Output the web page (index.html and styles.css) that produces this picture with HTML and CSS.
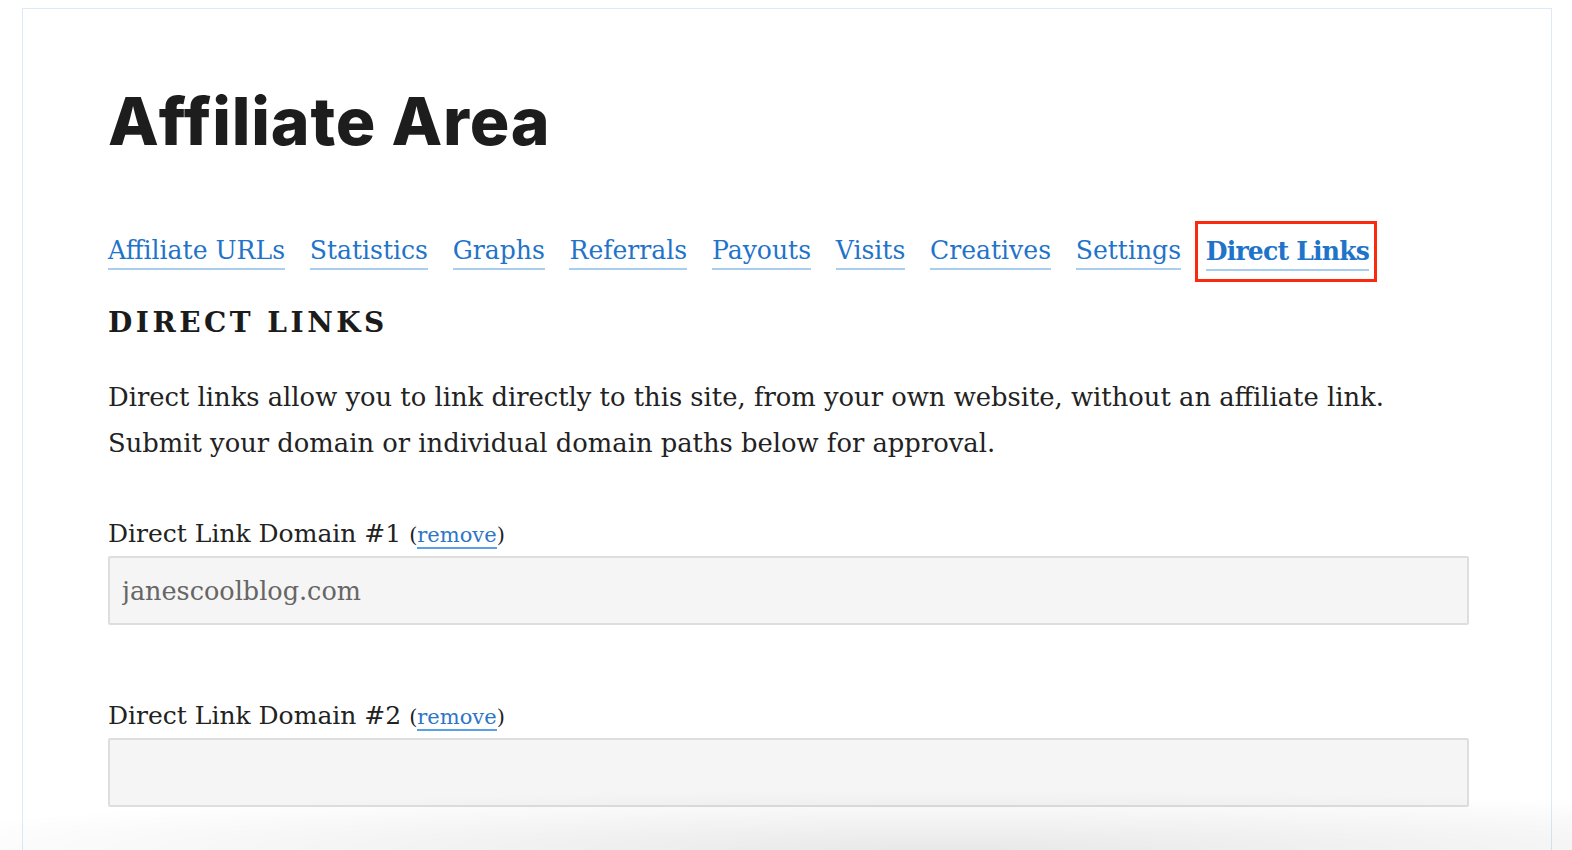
FILE: index.html
```html
<!DOCTYPE html>
<html lang="en">
<head>
  <meta charset="UTF-8">
  <title>Affiliate Area</title>
  <link rel="stylesheet" href="styles.css">
</head>
<body>
  <div class="page-box">
    <h1 class="area-title">Affiliate Area</h1>

    <ul class="tabs">
      <li><a href="#">Affiliate URLs</a></li>
      <li><a href="#">Statistics</a></li>
      <li><a href="#">Graphs</a></li>
      <li><a href="#">Referrals</a></li>
      <li><a href="#">Payouts</a></li>
      <li><a href="#">Visits</a></li>
      <li><a href="#">Creatives</a></li>
      <li><a href="#">Settings</a></li>
      <li class="active"><a href="#">Direct Links</a></li>
    </ul>

    <h2 class="section-title">Direct Links</h2>
    <p class="intro">Direct links allow you to link directly to this site, from your own website, without an affiliate link.<br>Submit your domain or individual domain paths below for approval.</p>

    <div class="field">
      <label>Direct Link Domain #1 <span class="small">(<a href="#">remove</a>)</span></label>
      <input type="text" value="janescoolblog.com">
    </div>

    <div class="field">
      <label>Direct Link Domain #2 <span class="small">(<a href="#">remove</a>)</span></label>
      <input type="text" value="">
    </div>
  </div>
  <div class="bottom-shade"></div>
</body>
</html>
```

FILE: styles.css
```css
body {
  margin: 0;
  background: #fff;
  font-family: "DejaVu Serif", serif;
  color: #222;
  overflow: hidden;
}
.page-box {
  margin: 8px 20px 0 22px;
  border: 1px solid #dde9f6;
  border-bottom: none;
  padding: 76px 84px 60px 85px;
  height: 900px;
}
.area-title {
  font-family: "Inter", sans-serif;
  font-weight: 800;
  font-size: 66px;
  letter-spacing: 0.8px;
  color: #1d1d1d;
  margin: 0 0 79px;
  line-height: 72px;
}
.tabs {
  list-style: none;
  margin: 0;
  padding: 0;
  display: flex;
  gap: 24.7px;
}
.tabs li {
  position: relative;
}
.tabs a {
  font-size: 25.1px;
  color: #1f74c9;
  text-decoration: none;
  border-bottom: 2px solid #a9cdef;
  padding-bottom: 3px;
}
.tabs .active a {
  font-weight: bold;
  letter-spacing: -0.8px;
}
.tabs .active::after {
  content: "";
  position: absolute;
  left: -11px;
  right: -8px;
  top: -15px;
  bottom: -16px;
  border: 3px solid #fb2a0f;
}
.section-title {
  font-size: 28px;
  font-weight: bold;
  text-transform: uppercase;
  letter-spacing: 3.5px;
  margin: 40px 0 35px;
  color: #1b1b1b;
}
.intro {
  font-size: 25.8px;
  line-height: 46px;
  margin: 0 0 51px;
}
.field {
  margin-bottom: 74px;
}
.field label {
  display: block;
  font-size: 25px;
  line-height: 34px;
  margin-bottom: 4px;
}
.small {
  font-size: 21px;
}
.small a {
  color: #2d76c6;
  text-decoration: none;
  border-bottom: 2px solid #5aa0e6;
}
.field input {
  display: block;
  box-sizing: border-box;
  width: 1361px;
  height: 69px;
  background: #f5f5f5;
  border: 2px solid #dedede;
  border-radius: 2px;
  padding: 0 12px;
  font-family: "DejaVu Serif", serif;
  font-size: 25.5px;
  color: #666;
}
.bottom-shade {
  position: fixed;
  left: 0;
  right: 0;
  bottom: 0;
  height: 60px;
  background: radial-gradient(ellipse 70% 100% at 60% 100%, rgba(0,0,0,0.09), rgba(0,0,0,0) 100%);
  pointer-events: none;
}
```
